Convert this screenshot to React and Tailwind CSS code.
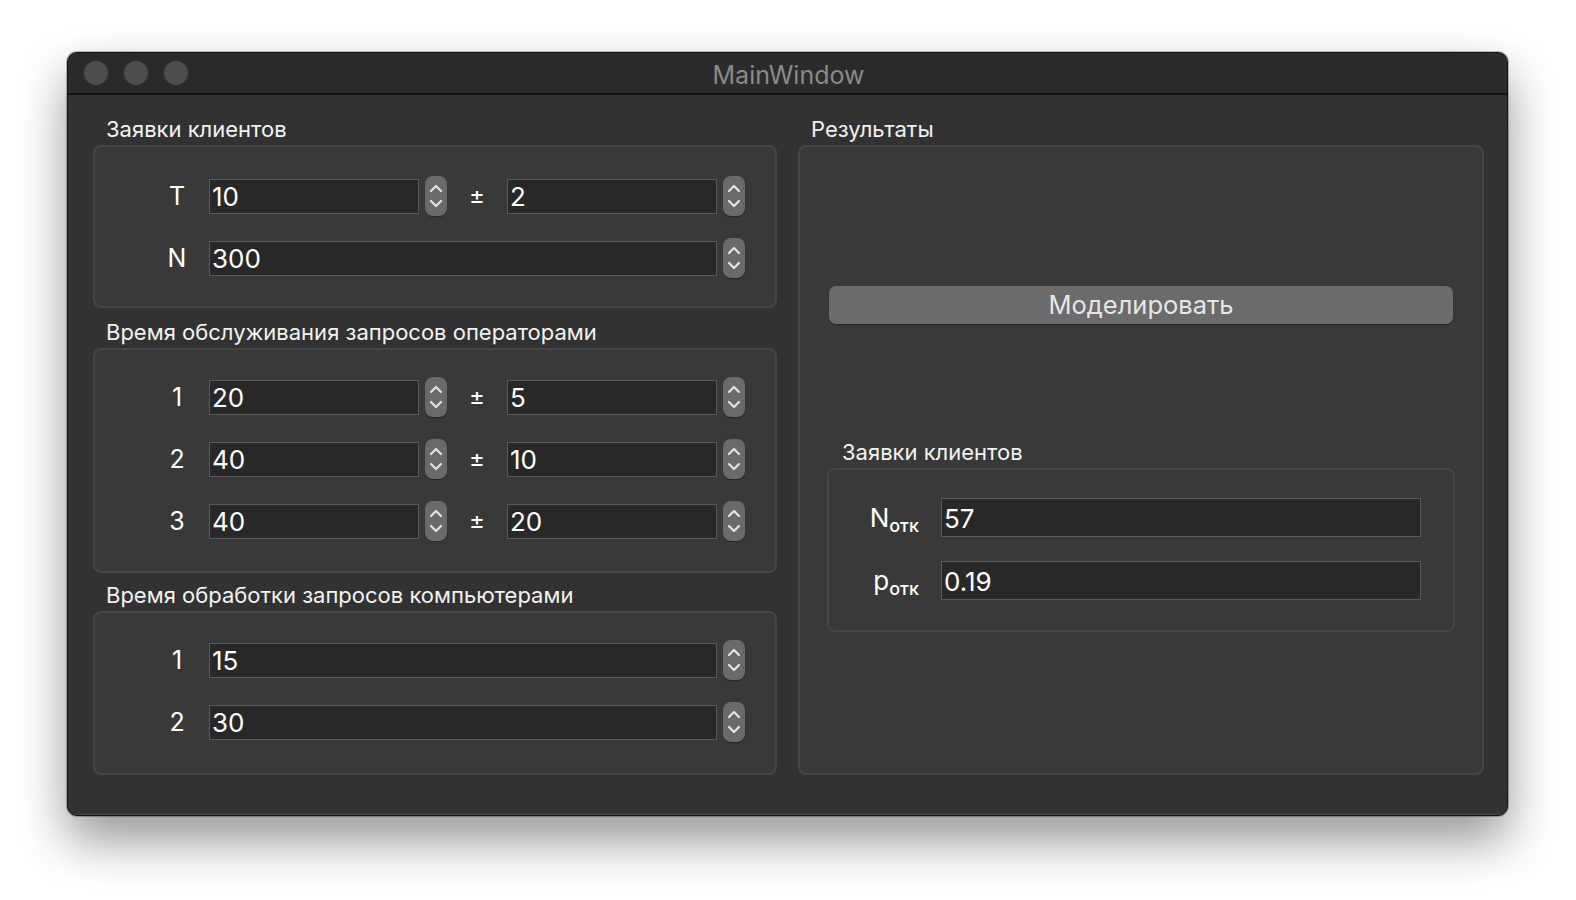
import React from "react";

const font = { fontFamily: "Inter, 'Noto Sans', sans-serif" };

function Spinner() {
  return (
    <div className="w-[22px] h-[40px] rounded-[8px] bg-[#6a6a6a] shrink-0 shadow-[0_1px_1px_rgba(0,0,0,0.35)]">
      <svg width="22" height="40" viewBox="0 0 22 40" fill="none">
        <path d="M6 15 L11 10 L16 15" stroke="#e4e4e4" strokeWidth="2.2" strokeLinecap="round" strokeLinejoin="round" />
        <path d="M6 25 L11 30 L16 25" stroke="#e4e4e4" strokeWidth="2.2" strokeLinecap="round" strokeLinejoin="round" />
      </svg>
    </div>
  );
}

function Field({ value, className }) {
  return (
    <div
      className={
        "h-[35px] bg-[#282828] border border-[#5a5a5a] flex items-center pl-[2px] pt-[2px] text-[26px] text-white leading-none " +
        className
      }
    >
      {value}
    </div>
  );
}

function PairRow({ label, a, b }) {
  return (
    <div className="flex items-center h-[40px]">
      <div className="w-[50px] pt-[2px] text-center text-[25px] text-white">{label}</div>
      <Field value={a} className="ml-[7px] w-[210px]" />
      <div className="ml-[6px]">
        <Spinner />
      </div>
      <div className="w-[60px] text-center text-[24px] text-white">±</div>
      <Field value={b} className="w-[210px]" />
      <div className="ml-[6px]">
        <Spinner />
      </div>
    </div>
  );
}

function SingleRow({ label, value }) {
  return (
    <div className="flex items-center h-[40px]">
      <div className="w-[50px] pt-[2px] text-center text-[25px] text-white">{label}</div>
      <Field value={value} className="ml-[7px] w-[508px]" />
      <div className="ml-[6px]">
        <Spinner />
      </div>
    </div>
  );
}

function GroupLabel({ children, className }) {
  return (
    <div className={"h-[32px] flex items-center pl-[13px] text-[22px] text-[#f2f2f2] " + (className || "")}>
      {children}
    </div>
  );
}

function Box({ children, className }) {
  return (
    <div
      className={
        "rounded-[8px] border-2 border-[#464646] bg-[#393939] " + (className || "")
      }
    >
      {children}
    </div>
  );
}

function ResultRow({ main, value }) {
  return (
    <div className="flex items-center h-[39px]">
      <div className="w-[92px] pr-[2px] text-right text-[26px] text-white leading-none">
        {main}
        <span className="text-[18px] font-medium relative top-[5px]">отк</span>
      </div>
      <div className="w-[480px] ml-[20px] h-[39px] bg-[#282828] border border-[#5a5a5a] flex items-center pl-[2px] pt-[2px] text-[26px] text-white leading-none">
        {value}
      </div>
    </div>
  );
}

export default function App() {
  return (
    <div className="w-[1576px] h-[900px] bg-white pt-[52px] pl-[67px]" style={font}>
      <div className="w-[1441px] h-[764px] rounded-[10px] border border-[#151515] bg-[#323232] overflow-hidden shadow-[0_0_0_1px_rgba(0,0,0,0.25),0_24px_50px_rgba(0,0,0,0.42)] flex flex-col">
        <div className="h-[42px] bg-[#2b2b2b] border-b-2 border-[#111] flex items-center relative shrink-0">
          <div className="flex gap-[16px] pl-[16px]">
            <div className="w-[24px] h-[24px] rounded-full bg-[#4d4d4d]" />
            <div className="w-[24px] h-[24px] rounded-full bg-[#4d4d4d]" />
            <div className="w-[24px] h-[24px] rounded-full bg-[#4d4d4d]" />
          </div>
          <div className="absolute inset-0 flex items-center justify-center text-[25px] text-[#8a8a8a] pt-[5px] pl-[2px]">
            MainWindow
          </div>
        </div>
        <div className="flex gap-[21px] pl-[25px] pt-[18px] flex-1 shadow-[inset_0_-1px_0_#4a4a4a]">
          <div className="w-[684px] flex flex-col">
            <GroupLabel>Заявки клиентов</GroupLabel>
            <Box className="h-[163px] pl-[57px] pt-[29px] flex flex-col gap-[22px]">
              <PairRow label="T" a="10" b="2" />
              <SingleRow label="N" value="300" />
            </Box>
            <GroupLabel className="mt-[8px]">Время обслуживания запросов операторами</GroupLabel>
            <Box className="h-[225px] pl-[57px] pt-[27px] flex flex-col gap-[22px]">
              <PairRow label="1" a="20" b="5" />
              <PairRow label="2" a="40" b="10" />
              <PairRow label="3" a="40" b="20" />
            </Box>
            <GroupLabel className="mt-[6px]">Время обработки запросов компьютерами</GroupLabel>
            <Box className="h-[164px] pl-[57px] pt-[27px] flex flex-col gap-[22px]">
              <SingleRow label="1" value="15" />
              <SingleRow label="2" value="30" />
            </Box>
          </div>
          <div className="w-[686px] flex flex-col">
            <GroupLabel>Результаты</GroupLabel>
            <Box className="h-[630px] px-[29px] pt-[139px] flex flex-col">
              <div className="h-[38px] rounded-[7px] bg-[#6b6b6b] flex items-center justify-center text-[25.5px] text-[#e6e6e6] shadow-[0_1px_1px_rgba(0,0,0,0.35)]">
                Моделировать
              </div>
              <div className="mt-[112px]">
                <GroupLabel>Заявки клиентов</GroupLabel>
              </div>
              <div className="-mx-[2px]">
                <Box className="h-[164px] bg-[#3d3d3d] pt-[28px] flex flex-col gap-[24px]">
                  <ResultRow main="N" value="57" />
                  <ResultRow main="p" value="0.19" />
                </Box>
              </div>
            </Box>
          </div>
        </div>
      </div>
    </div>
  );
}
